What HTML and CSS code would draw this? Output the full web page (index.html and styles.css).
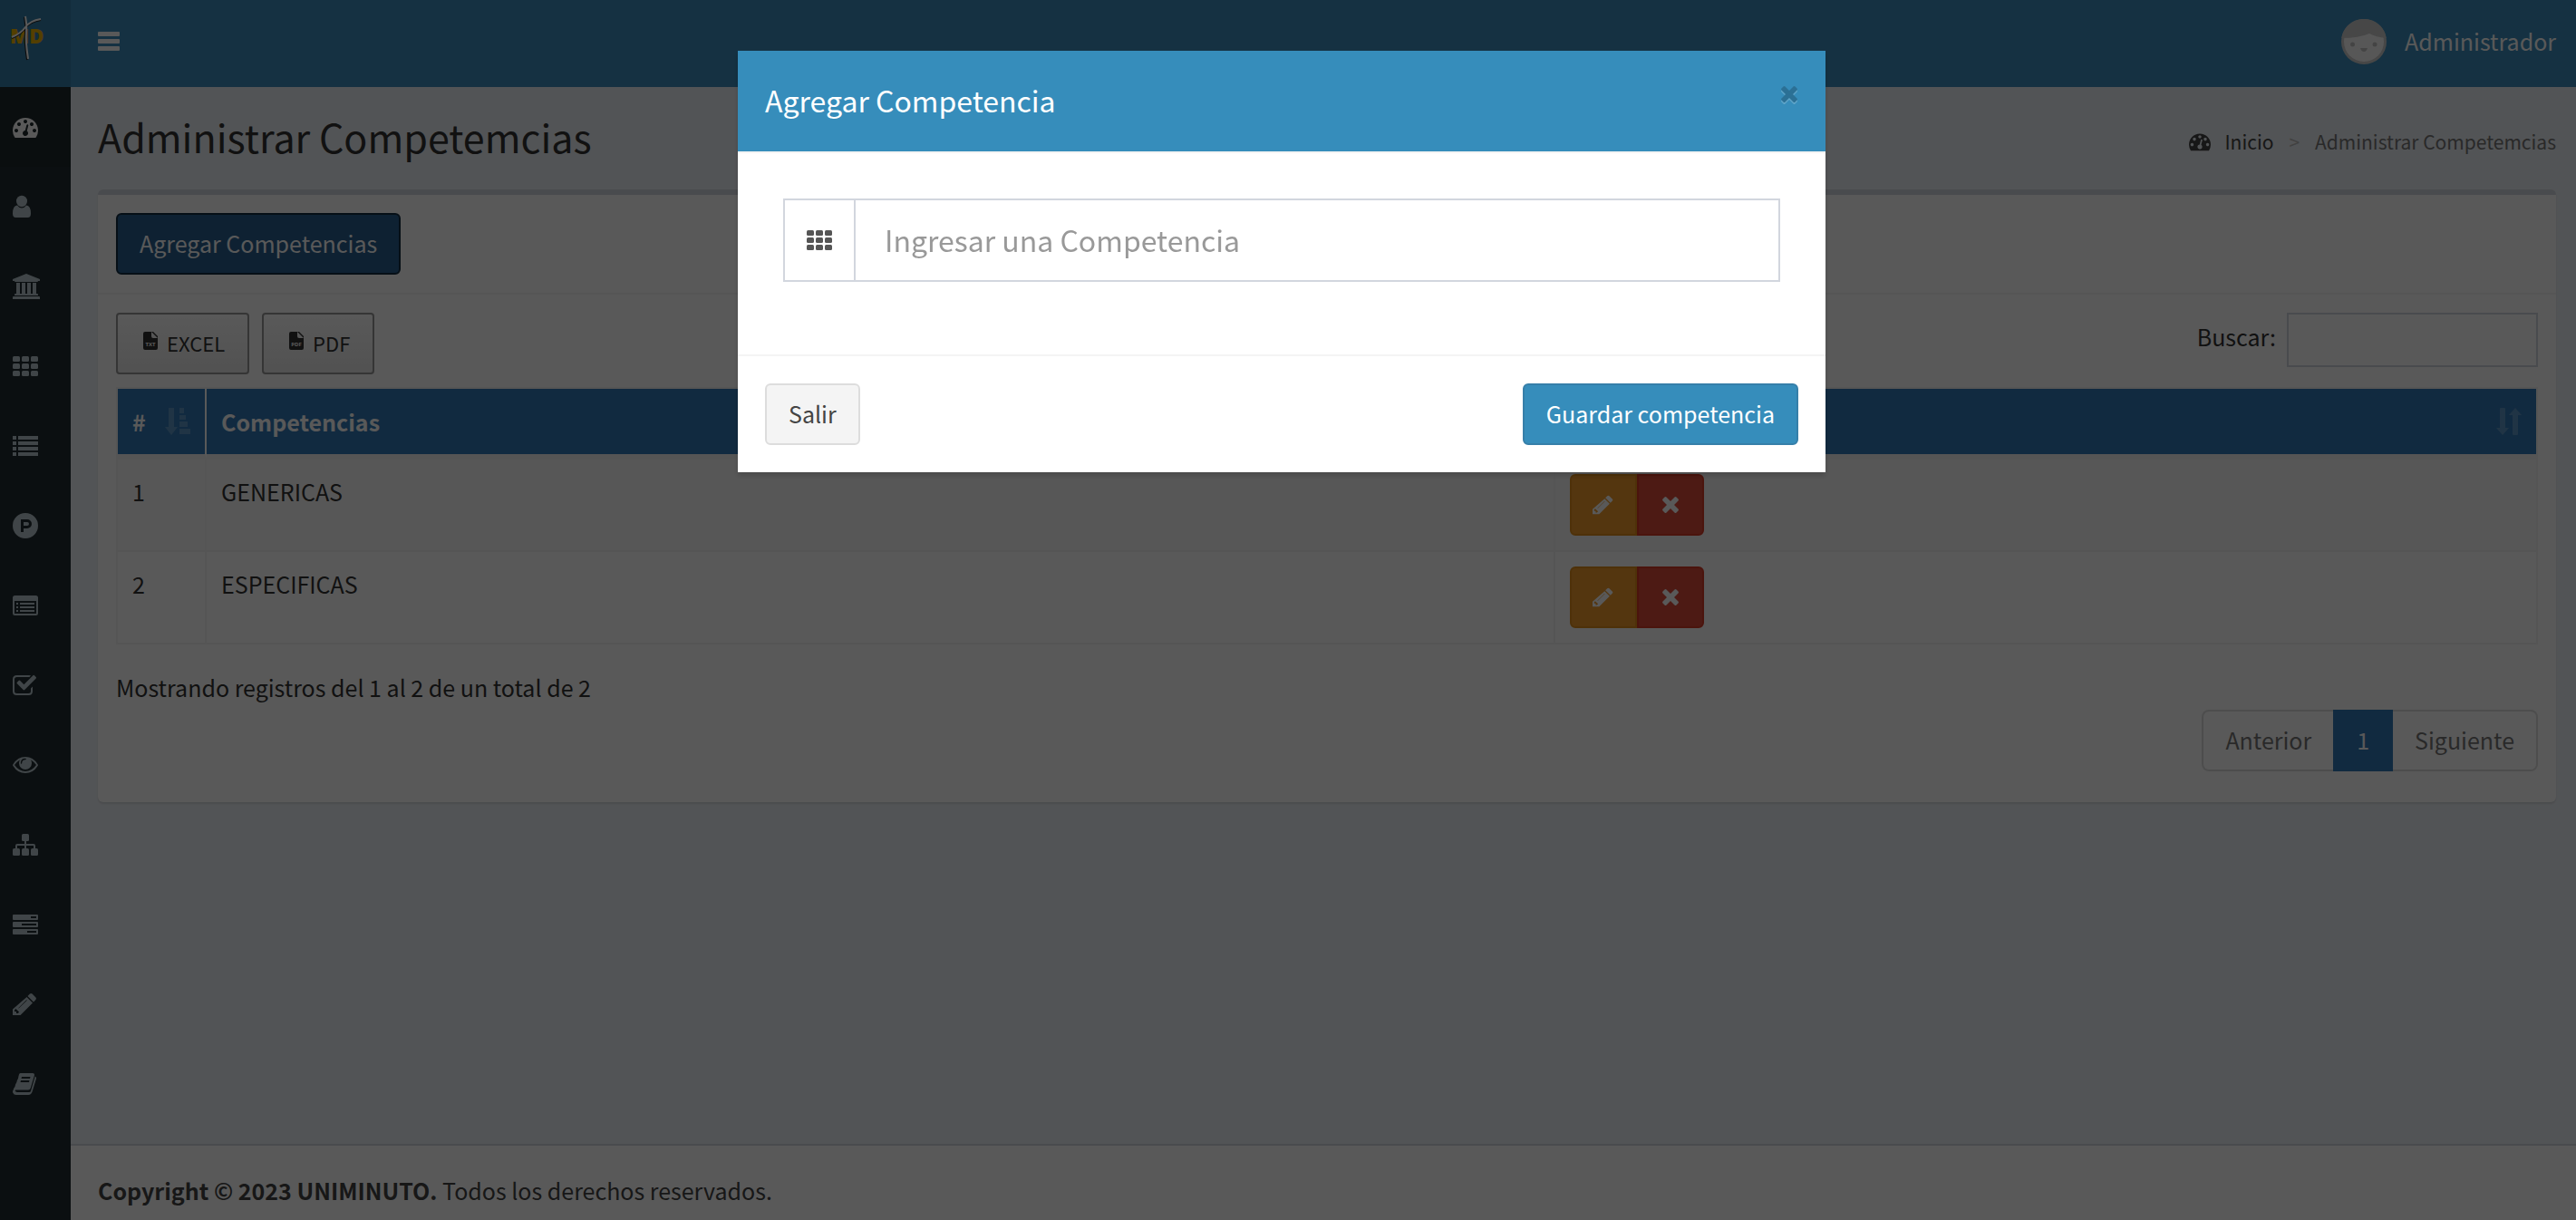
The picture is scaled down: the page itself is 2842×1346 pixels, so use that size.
FILE: index.html
```html
<!DOCTYPE html>
<html lang="es">
<head>
<meta charset="utf-8">
<title>Administrar Competemcias</title>
<link rel="stylesheet" href="styles.css">
</head>
<body>
<svg class="sprite" aria-hidden="true">
  <symbol id="i-dashboard" viewBox="0 0 1792 1792"><path d="M384 1152q0-53-37.5-90.5t-90.5-37.5-90.5 37.5-37.5 90.5 37.5 90.5 90.5 37.5 90.5-37.5 37.5-90.5zm192-448q0-53-37.500-90.500t-90.500-37.500-90.500 37.500-37.500 90.500 37.500 90.500 90.500 37.500 90.500-37.500 37.500-90.500zm428 481l101-382q6-26-7.500-48.500t-38.500-29.500-48 6.500-30 39.500l-101 382q-60 5-107 43.500t-63 98.500q-20 77 20 146t117 89 146-20 89-117q16-60-6-117t-72-91zm660-33q0-53-37.500-90.500t-90.500-37.500-90.500 37.500-37.500 90.500 37.500 90.500 90.500 37.500 90.500-37.500 37.500-90.500zm-640-640q0-53-37.500-90.500t-90.500-37.500-90.500 37.500-37.500 90.500 37.500 90.500 90.500 37.500 90.500-37.500 37.500-90.500zm448 192q0-53-37.500-90.500t-90.500-37.500-90.500 37.500-37.500 90.500 37.500 90.500 90.500 37.500 90.500-37.500 37.500-90.500zm320 448q0 261-141 483-19 29-54 29h-1402q-35 0-54-29-141-221-141-483 0-182 71-348t191-286 286-191 348-71 348 71 286 191 191 286 71 348z"/></symbol>
  <symbol id="i-user" viewBox="0 0 28 28"><ellipse cx="10" cy="8" rx="6" ry="6.200"/><path d="M5 12.500Q7 15.500 10 15.500T15 12.500Q20 13 20 21.500Q20 26 16.500 26H3.500Q0 26 0 21.500Q0 13 5 12.500z"/></symbol>
  <symbol id="i-bank" viewBox="0 0 30 28"><path d="M15 0l15 6v2h-2q0 1-1 1H3Q2 9 2 8H0V6zM4 10h4v12h2V10h4v12h2V10h4v12h2V10h4v12h1q1 0 1 1v1H2v-1q0-1 1-1h1zM1 25h28q1 0 1 1v2H0v-2q0-1 1-1z"/></symbol>
  <symbol id="i-th" viewBox="0 0 28 28"><g id="th-row"><rect x="0" y="3" width="8" height="6" rx="1.500"/><rect x="10" y="3" width="8" height="6" rx="1.500"/><rect x="20" y="3" width="8" height="6" rx="1.500"/></g><use href="#th-row" y="8"/><use href="#th-row" y="16"/></symbol>
  <symbol id="i-list" viewBox="0 0 28 28"><path d="M0 3h4v4H0zm6 0h22v4H6zM0 9h4v4H0zm6 0h22v4H6zM0 15h4v4H0zm6 0h22v4H6zM0 21h4v4H0zm6 0h22v4H6z"/></symbol>
  <symbol id="i-product" viewBox="0 0 28 28"><path fill-rule="evenodd" d="M14 0a14 14 0 1 1 0 28a14 14 0 1 1 0-28zM9 7v14h3v-4h4a5 5 0 0 0 0-10zM12 10h4a2 2 0 0 1 0 4h-4z"/></symbol>
  <symbol id="i-list-alt" viewBox="0 0 28 28"><path fill-rule="evenodd" d="M2.500 3h23A2.500 2.500 0 0 1 28 5.500v17a2.500 2.500 0 0 1-2.500 2.500h-23A2.500 2.500 0 0 1 0 22.500v-17A2.500 2.500 0 0 1 2.500 3zM2 9v13.500q0 .5.5.5h23q.5 0 .5-.5V9zM4 11h2v2H4zm4 0h16v2H8zM4 15h2v2H4zm4 0h16v2H8zM4 19h2v2H4zm4 0h16v2H8z"/></symbol>
  <symbol id="i-check" viewBox="0 0 28 28"><path d="M20 3.300Q19 3 17.500 3h-13Q0 3 0 7.500v13Q0 25 4.500 25h13q4.500 0 4.500-4.500v-5l-2 2v3q0 2.500-2.500 2.500h-13Q2 23 2 20.500v-13Q2 5 4.500 5h14z"/><path d="M25.700 6.500L13.200 19q-.8.800-1.600 0L4.900 12.300q-.8-.8 0-1.600l1.700-1.700q.8-.8 1.600 0l4.200 4.200L22.400 3.200q.8-.8 1.600 0l1.700 1.700q.8.800 0 1.600z"/></symbol>
  <symbol id="i-eye" viewBox="0 0 28 28"><path fill-rule="evenodd" d="M14 5q8.500 0 13.600 8.200q.7.900 0 1.700Q22.500 23 14 23T.4 14.900q-.7-.8 0-1.700Q5.500 5 14 5zM8 8.200Q4.600 10.300 2 14q5 7 12 7t12-7q-2.600-3.700-6-5.800Q21 10 21 12a7 7 0 0 1-14 0q0-2 1-3.800zM14 6.800q.8 0 .8.700t-.8.700q-3.800 0-3.800 3.800 0 .7-.7.700t-.7-.7q0-5.200 5.200-5.200z"/></symbol>
  <symbol id="i-sitemap" viewBox="0 0 28 28"><rect x="10" y="2" width="8" height="8" rx="1.500"/><rect y="18" width="8" height="8" rx="1.500"/><rect x="10" y="18" width="8" height="8" rx="1.500"/><rect x="20" y="18" width="8" height="8" rx="1.500"/><path d="M13 9h2v4h8q2 0 2 2v4h-2v-4h-8v4h-2v-4H5v4H3v-4q0-2 2-2h8z"/></symbol>
  <symbol id="i-tasks" viewBox="0 0 28 28"><path fill-rule="evenodd" d="M1 3h26q1 0 1 1v4q0 1-1 1H1Q0 9 0 8V4q0-1 1-1zm19 2v2h6V5zM1 11h26q1 0 1 1v4q0 1-1 1H1q-1 0-1-1v-4q0-1 1-1zm9 2v2h16v-2zM1 19h26q1 0 1 1v4q0 1-1 1H1q-1 0-1-1v-4q0-1 1-1zm15 2v2h10v-2z"/></symbol>
  <symbol id="i-pencil" viewBox="0 0 28 28"><path fill-rule="evenodd" d="M15.500 6L22 12.500 8.500 26H0v-6.500zM2 20.500v1.500h2v2h1.700l1.400-1.400L3.400 19zM15.200 9.300L6.500 18q-.5.700.1.600L15.700 9.700q.1-.8-.5-.4z"/><path d="M16.500 5l2.400-2.400q1.300-1.200 2.700 0l3.800 3.800q1.200 1.300 0 2.700L23 11.500z"/></symbol>
  <symbol id="i-book" viewBox="0 0 28 28"><path fill-rule="evenodd" d="M8.500 2h13.700q2.300.2 1.700 2.600l-4.200 14q-.6 2-2.600 2H3.500q-1.200 0-.8 1 .5 1.300 2.200 1.300h13.500q1.200 0 1.600-1.200L24.300 7q.3-.8.200-1.600 2 .8 1.400 2.800L21.700 22q-1.200 4-4.500 4H4Q1.200 26 .2 23.500q-.4-1.200.1-2.300.7-.9.900-2.400 1.700-2 1.900-4.400 1.500-2 1.700-4.200Q6.200 8.500 6.400 5.800 7 2 8.500 2zM10 6l-.5 2H19l.5-2zM9 10l-.5 2H18l.5-2z"/></symbol>
  <symbol id="i-times" viewBox="0 0 20 20"><path d="M5.500 1.500L10 6l4.500-4.500q1-1 2 0l2 2q1 1 0 2L14 10l4.500 4.500q1 1 0 2l-2 2q-1 1-2 0L10 14l-4.500 4.500q-1 1-2 0l-2-2q-1-1 0-2L6 10 1.500 5.500q-1-1 0-2l2-2q1-1 2 0z"/></symbol>
  <symbol id="i-bars" viewBox="0 0 24 22"><rect width="24" height="5" rx="1"/><rect y="8" width="24" height="5" rx="1"/><rect y="16" width="24" height="5" rx="1"/></symbol>
  <symbol id="i-file" viewBox="0 0 16 20"><path d="M2 0h7v5q0 2 2 2h5v11q0 2-2 2H2q-2 0-2-2V2Q0 0 2 0z"/><path d="M9 0h2l5 5v2z"/></symbol>
  <symbol id="i-sort-asc" viewBox="0 0 28 30"><path d="M4 0h6v21h4L7 30 0 21h4zM16 0h5v6h-5zm0 8h7v5h-7zm0 7h9v6h-9zm0 8h12v6H16z"/></symbol>
  <symbol id="i-sort" viewBox="0 0 28 30"><path d="M4 1q0-1 1-1h4q1 0 1 1v21h4l-7 8-7-8h4zM18 29q0 1 1 1h4q1 0 1-1V8h4l-7-8-7 8h4z"/></symbol>
</svg>

<div class="page">
  <aside class="sidebar">
    <a class="logo" href="#">
      <svg viewBox="0 0 40 60" width="40" height="60"><text class="logo-text" x="1" y="36">MD</text><path class="logo-edge" d="M17 7q2 9 1 18t2 29M3 30q10-4 15-11T35 10"/><path class="logo-line" d="M18 6q2 9 1 18t2 29M3 29q10-4 15-11T35 9"/></svg>
    </a>
    <nav class="menu">
      <a class="active" href="#"><svg><use href="#i-dashboard"/></svg></a>
      <a href="#"><svg><use href="#i-user"/></svg></a>
      <a href="#"><svg class="wide"><use href="#i-bank"/></svg></a>
      <a href="#"><svg><use href="#i-th"/></svg></a>
      <a href="#"><svg><use href="#i-list"/></svg></a>
      <a href="#"><svg><use href="#i-product"/></svg></a>
      <a href="#"><svg><use href="#i-list-alt"/></svg></a>
      <a href="#"><svg><use href="#i-check"/></svg></a>
      <a href="#"><svg><use href="#i-eye"/></svg></a>
      <a href="#"><svg><use href="#i-sitemap"/></svg></a>
      <a href="#"><svg><use href="#i-tasks"/></svg></a>
      <a href="#"><svg><use href="#i-pencil"/></svg></a>
      <a href="#"><svg><use href="#i-book"/></svg></a>
    </nav>
  </aside>

  <div class="main">
    <header class="navbar">
      <button class="toggle" type="button"><svg><use href="#i-bars"/></svg></button>
      <a class="account" href="#">
        <svg class="avatar" viewBox="0 0 50 50"><circle cx="25" cy="25" r="25" fill="#cbcbcb"/><circle cx="25" cy="25" r="22" fill="#fafafa"/><path d="M.3 21A25 25 0 0 1 49.700 21Q38 20 31 16Q20 21 .3 21z" fill="#cbcbcb"/><circle cx="12.500" cy="28" r="2.500" fill="#c4c4c4"/><circle cx="37" cy="28" r="2.500" fill="#c4c4c4"/><path d="M21 32h8q-1 4-4 4t-4-4z" fill="#c4c4c4"/></svg>
        <span>Administrador</span>
      </a>
    </header>

    <main class="content">
      <div class="content-header">
        <h1>Administrar Competemcias</h1>
        <nav class="breadcrumb"><a href="#"><svg><use href="#i-dashboard"/></svg>Inicio</a><span class="sep">&gt;</span><span>Administrar Competemcias</span></nav>
      </div>

      <section class="box">
        <div class="box-header"><button class="btn btn-add" type="button">Agregar Competencias</button></div>
        <div class="box-body">
          <div class="tools">
            <div class="exports">
              <button class="btn-export" type="button"><svg viewBox="0 0 16 20"><use href="#i-file"/><text x="8" y="16">TXT</text></svg>EXCEL</button>
              <button class="btn-export" type="button"><svg viewBox="0 0 16 20"><use href="#i-file"/><text x="8" y="16">PDF</text></svg>PDF</button>
            </div>
            <label class="search">Buscar:<input type="search"></label>
          </div>
          <table class="grid">
            <colgroup><col class="col-num"><col><col class="col-actions"></colgroup>
            <thead>
              <tr>
                <th><div class="th">#<svg><use href="#i-sort-asc"/></svg></div></th>
                <th><div class="th">Competencias</div></th>
                <th><div class="th th-end"><svg><use href="#i-sort"/></svg></div></th>
              </tr>
            </thead>
            <tbody>
              <tr><td>1</td><td>GENERICAS</td><td><div class="actions"><button class="edit" type="button"><svg><use href="#i-pencil"/></svg></button><button class="delete" type="button"><svg><use href="#i-times"/></svg></button></div></td></tr>
              <tr><td>2</td><td>ESPECIFICAS</td><td><div class="actions"><button class="edit" type="button"><svg><use href="#i-pencil"/></svg></button><button class="delete" type="button"><svg><use href="#i-times"/></svg></button></div></td></tr>
            </tbody>
          </table>
          <p class="info">Mostrando registros del 1 al 2 de un total de 2</p>
          <nav class="pagination"><a href="#">Anterior</a><a class="current" href="#">1</a><a href="#">Siguiente</a></nav>
        </div>
      </section>
    </main>

    <footer class="footer"><strong>Copyright © 2023 UNIMINUTO.</strong> Todos los derechos reservados.</footer>
  </div>
</div>

<div class="overlay">
  <form class="modal" role="dialog" aria-labelledby="modal-title">
    <div class="modal-header">
      <h2 id="modal-title">Agregar Competencia</h2>
      <button class="close" type="button"><svg><use href="#i-times"/></svg></button>
    </div>
    <div class="modal-body">
      <div class="input-group">
        <label for="competencia"><svg><use href="#i-th"/></svg></label>
        <input id="competencia" type="text" placeholder="Ingresar una Competencia">
      </div>
    </div>
    <div class="modal-footer">
      <button class="btn btn-default" type="button">Salir</button>
      <button class="btn btn-primary" type="button">Guardar competencia</button>
    </div>
  </form>
</div>
</body>
</html>
```
FILE: styles.css
```css
* { box-sizing: border-box; }

body {
  margin: 0;
  font-family: "Noto Sans CJK SC", "Noto Sans", sans-serif;
  font-size: 25px;
  line-height: 38px;
  color: #333;
  background: #ecf0f5;
}

a { color: inherit; text-decoration: none; }
button, input { font: inherit; }
button { cursor: pointer; }
svg { display: block; flex: none; fill: currentColor; }
h1, h2, p { margin: 0; font-weight: 400; }

.sprite { position: absolute; width: 0; height: 0; }

.page { display: flex; min-height: 100vh; }

/* Sidebar */
.sidebar { flex: none; width: 78px; background: #222d32; }
.logo { display: block; height: 96px; padding: 12px 10px; background: #367fa9; }
.logo-text { font: 800 22px "Open Sans", sans-serif; fill: #f0b400; }
.logo-edge { fill: none; stroke: #222; stroke-width: 2px; }
.logo-line { fill: none; stroke: #fff; stroke-width: 2px; }
.menu a { display: flex; align-items: center; height: 88px; padding-left: 14px; color: #b8c7ce; }
.menu a.active { color: #fff; background: #1e282c; }
.menu svg { width: 28px; height: 28px; }
.menu svg.wide { width: 30px; }

.main { flex: 1; min-width: 0; display: flex; flex-direction: column; }

/* Top bar */
.navbar { display: flex; justify-content: space-between; align-items: center; height: 96px; padding: 0 22px 4px 30px; background: #3c8dbc; color: #fff; }
.toggle { padding: 0; border: 0; background: none; color: inherit; }
.toggle svg { width: 24px; height: 22px; }
.account { display: flex; align-items: center; gap: 20px; }
.account span { padding-bottom: 2px; }
.avatar { width: 50px; height: 50px; }

/* Content */
.content { flex: 1; padding: 0 22px 0 30px; }
.content-header { display: flex; justify-content: space-between; align-items: center; height: 113px; }
h1 { padding-bottom: 6px; font-size: 43px; line-height: 60px; }
.breadcrumb { display: flex; align-items: center; gap: 17px; padding-top: 6px; font-size: 21px; color: #777; }
.breadcrumb a { display: flex; align-items: center; gap: 15px; color: #444; }
.breadcrumb svg { width: 24px; height: 24px; }
.breadcrumb .sep { color: #bbb; }

.box { border-top: 6px solid #d2d6de; border-radius: 6px; background: #fff; box-shadow: 0 2px 2px rgba(0, 0, 0, .1); }
.box-header { padding: 20px; border-bottom: 2px solid #f4f4f4; }
.box-body { padding: 20px 20px 34px; }

.btn { height: 68px; padding: 0 24px 2px; border: 2px solid; border-radius: 6px; }
.btn-add { border-color: #122b40; background: #286090; color: #fff; }

.tools { display: flex; justify-content: space-between; align-items: flex-start; height: 82px; }
.exports { display: flex; gap: 14px; }
.btn-export { display: flex; align-items: center; gap: 10px; height: 68px; padding: 0 25px 2px 28px; border: 2px solid #999; border-radius: 4px; background: linear-gradient(#fff, #e9e9e9); color: #333; font-size: 22px; }
.btn-export svg { width: 16px; height: 20px; margin-bottom: 4px; }
.btn-export text { font: 700 6px "Open Sans", sans-serif; text-anchor: middle; fill: #fff; }
.search { display: flex; gap: 12px; line-height: 52px; }
.search input { width: 277px; height: 60px; padding: 0 20px; border: 2px solid #d2d6de; background: #fff; }

/* Records table */
.grid { width: 100%; table-layout: fixed; border: 2px solid #f4f4f4; border-right: 0; border-bottom: 0; border-spacing: 0; }
.col-num { width: 98px; }
.col-actions { width: 40.6%; }
.grid th { height: 76px; padding: 0 16px; border-right: 2px solid #fff; border-bottom: 4px solid #f4f4f4; background: #337ab7; background-clip: padding-box; color: #fff; text-align: left; font-weight: 700; }
.th { display: flex; align-items: center; justify-content: space-between; }
.th-end { justify-content: flex-end; }
.th svg { width: 28px; height: 30px; opacity: .2; }
.grid th:last-child, .grid td { border-right: 2px solid #f4f4f4; }
.grid td { padding: 16px; border-bottom: 2px solid #f4f4f4; vertical-align: top; }
.grid tbody tr:first-child td { border-top: 2px solid #f4f4f4; background: #f9f9f9; }
.actions { display: flex; }
.actions button { display: flex; align-items: center; justify-content: center; width: 74px; height: 68px; padding: 0; border: 2px solid; color: #fff; }
.actions svg { width: 24px; height: 24px; }
.actions .edit { border-color: #e08e1b; border-radius: 6px 0 0 6px; background: #f09a2b; }
.actions .delete { border-color: #d73925; border-radius: 0 6px 6px 0; background: #dd4b39; }
.actions .delete svg { width: 20px; height: 20px; }

.info { padding-top: 28px; }
.pagination { display: flex; justify-content: flex-end; padding-top: 6px; color: #777; }
.pagination a { height: 68px; padding: 0 24px; border: 2px solid #ddd; line-height: 62px; }
.pagination a:first-child { border-right: 0; border-radius: 8px 0 0 8px; }
.pagination a:last-child { border-left: 0; border-radius: 0 8px 8px 0; }
.pagination .current { border-color: #337ab7; background: #337ab7; color: #fff; }

.footer { height: 84px; padding: 30px; border-top: 2px solid #d2d6de; background: #fff; color: #444; }

/* Modal */
.overlay { position: fixed; inset: 0; padding: 56px 14px 0 0; background: rgba(0, 0, 0, .65); }
.modal { width: 1200px; max-width: 100%; margin: 0 auto; background: #fff; box-shadow: 0 4px 6px rgba(0, 0, 0, .15); }
.modal-header { display: flex; justify-content: space-between; align-items: flex-start; height: 113px; padding: 30px; border-bottom: 2px solid #f4f4f4; background: #368dbb; background-clip: padding-box; color: #fff; }
.modal-header h2 { font-size: 32px; line-height: 48px; }
.close { padding: 8px 0; border: 0; background: none; color: #000; opacity: .2; }
.close svg { width: 20px; height: 20px; filter: drop-shadow(0 2px 0 #fff); }
.modal-body { padding: 50px 50px 80px; }
.input-group { display: flex; height: 92px; border: 2px solid #d2d6de; }
.input-group label { display: flex; align-items: center; justify-content: center; width: 78px; border-right: 2px solid #d2d6de; color: #555; }
.input-group svg { width: 28px; height: 28px; }
.input-group input { flex: 1; min-width: 0; padding: 0 32px 2px; border: 0; background: none; color: #555; font-size: 32px; }
.input-group input::placeholder { color: #999; opacity: 1; }
.modal-footer { display: flex; justify-content: space-between; padding: 30px; border-top: 2px solid #f4f4f4; }
.btn-default { border-color: #ddd; background: #f4f4f4; color: #444; }
.btn-primary { border-color: #367fa9; background: #368dbb; color: #fff; }
```
